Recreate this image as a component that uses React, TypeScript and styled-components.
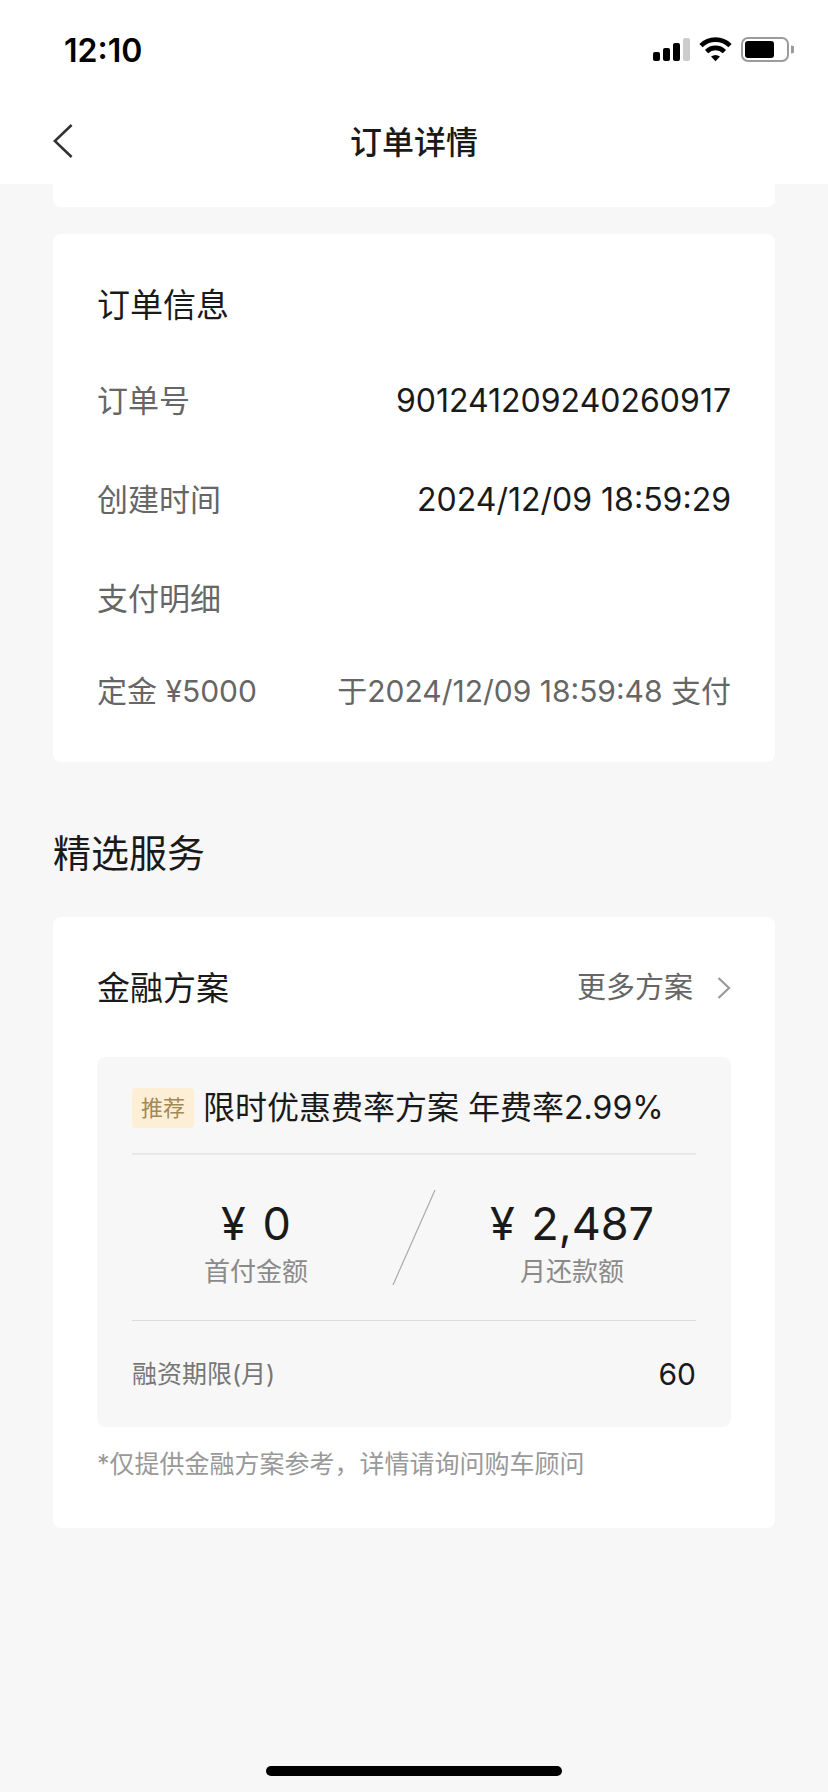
import React from "react";
import styled, { createGlobalStyle } from "styled-components";

const GlobalStyle = createGlobalStyle`
  *, *::before, *::after { box-sizing: border-box; }
  body {
    margin: 0;
    background: #f7f7f7;
    color: #1a1a1a;
    font-family: Inter, "Noto Sans CJK SC", sans-serif;
  }
  h1, h2, h3, p, dl, dt, dd { margin: 0; font-weight: 400; }
`;

const Page = styled.div`
  display: flex;
  flex-direction: column;
  min-height: 100vh;
`;

const Header = styled.header`
  background: #fff;
`;

const StatusBar = styled.div`
  display: flex;
  align-items: center;
  justify-content: space-between;
  height: 98px;
  padding: 0 34px 0 64px;
`;

const Clock = styled.time`
  padding-top: 3px;
  font-size: 32px;
  line-height: 40px;
  font-weight: 600;
  color: #000;
`;

const StatusIcons = styled.div`
  display: flex;
  align-items: center;
  gap: 9px;
`;

const NavBar = styled.nav`
  display: grid;
  grid-template-columns: 1fr auto 1fr;
  align-items: center;
  height: 86px;
  padding: 0 53px;
`;

const BackButton = styled.button`
  display: flex;
  justify-self: start;
  padding: 0;
  border: 0;
  background: none;
`;

const NavTitle = styled.h1`
  padding-top: 3px;
  font-size: 32px;
  line-height: 48px;
  font-weight: 500;
`;

const Content = styled.main`
  padding: 0 53px;
`;

const PreviousCard = styled.div`
  height: 23px;
  border-radius: 0 0 8px 8px;
  background: #fff;
`;

const Card = styled.section<{ $gap: number }>`
  margin-top: ${(p) => p.$gap}px;
  padding: 44px;
  border-radius: 8px;
  background: #fff;
`;

const CardHeader = styled.div`
  display: flex;
  align-items: center;
  justify-content: space-between;
`;

const CardTitle = styled.h3`
  font-size: 33px;
  line-height: 54px;
`;

const SectionTitle = styled.h2`
  margin-top: 63px;
  font-size: 38px;
  line-height: 56px;
`;

const InfoList = styled.dl`
  display: flex;
  flex-direction: column;
  gap: 51px;
  margin-top: 45px;
`;

const InfoRow = styled.div`
  display: flex;
  justify-content: space-between;
  line-height: 48px;
`;

const InfoLabel = styled.dt`
  font-size: 31px;
  color: #666;
`;

const InfoValue = styled.dd`
  font-size: 32px;
`;

const PaymentRow = styled.p`
  display: flex;
  justify-content: space-between;
  margin: 44px 0 3px;
  font-size: 30px;
  line-height: 48px;
  color: #666;
`;

const MoreLink = styled.a`
  display: flex;
  align-items: center;
  gap: 24px;
  font-size: 29px;
  line-height: 48px;
  color: #666;
  text-decoration: none;
`;

const Plan = styled.div`
  margin-top: 42px;
  padding: 0 35px;
  border-radius: 8px;
  background: #f7f7f7;
`;

const PlanHeader = styled.div`
  display: flex;
  align-items: center;
  gap: 9px;
  padding: 27px 0 21px;
  border-bottom: 2px solid #e8e8e8;
`;

const Tag = styled.span`
  padding: 0 9px;
  border-radius: 4px;
  background: #fdefd6;
  color: #a38857;
  font-size: 22px;
  line-height: 40px;
`;

const PlanName = styled.span`
  font-size: 32px;
  line-height: 48px;
`;

const Metrics = styled.div`
  display: grid;
  grid-template-columns: 1fr 68px 1fr;
  justify-items: center;
  padding: 35px 0 30px;
  border-bottom: 1px solid #ddd;
`;

const Metric = styled.div`
  display: flex;
  flex-direction: column;
  align-items: center;
  gap: 4px;
  padding-top: 8px;
`;

const Amount = styled.span`
  font-size: 45px;
  line-height: 52px;
`;

const Currency = styled.span`
  margin-right: 4px;
`;

const MetricLabel = styled.span`
  font-size: 26px;
  line-height: 36px;
  color: #8a8a8a;
`;

const TermRow = styled.div`
  display: flex;
  justify-content: space-between;
  padding: 29px 0;
  line-height: 48px;
`;

const TermLabel = styled.span`
  font-size: 25px;
  color: #777;
`;

const TermValue = styled.span`
  font-size: 30px;
`;

const Note = styled.p`
  margin-top: 17px;
  font-size: 25px;
  line-height: 40px;
  color: #999;
`;

const HomeIndicator = styled.div`
  width: 296px;
  height: 10px;
  margin: auto auto 16px;
  border-radius: 5px;
  background: #000;
`;

const SignalIcon = () => (
  <svg width="37" height="25" viewBox="0 0 37 25" aria-hidden="true">
    <rect x="0" y="15" width="7" height="9" rx="2" />
    <rect x="10" y="11" width="7" height="13" rx="2" />
    <rect x="20" y="6" width="7" height="18" rx="2" />
    <rect x="30" y="1" width="7" height="23" rx="2" fill="#ccc" />
  </svg>
);

const WifiIcon = () => (
  <svg width="33" height="25" viewBox="0 0 33 25" aria-hidden="true">
    <g fill="none" stroke="#000" strokeWidth="4.6">
      <path d="M2 8.6A20.5 20.5 0 0 1 31 8.6" />
      <path d="M7.6 14.6A12.6 12.6 0 0 1 25.4 14.6" />
    </g>
    <path d="M12 19.6Q16.5 16.2 21 19.6L16.5 24.2Z" />
  </svg>
);

const BatteryIcon = () => (
  <svg width="53" height="25" viewBox="0 0 53 25" aria-hidden="true">
    <rect x="1" y="1" width="46" height="23" rx="6" fill="none" stroke="#9b9b9b" strokeWidth="2" />
    <rect x="4" y="4" width="29" height="17" rx="3" />
    <path d="M50 8.5A4 4 0 0 1 50 16.5Z" fill="#9b9b9b" />
  </svg>
);

const BackIcon = () => (
  <svg width="20" height="34" viewBox="0 0 20 34" fill="none" stroke="#333" strokeWidth="2.6" aria-hidden="true">
    <path d="M18.6 1L1.8 17L18.6 33" />
  </svg>
);

const ChevronIcon = () => (
  <svg width="14" height="22" viewBox="0 0 14 22" fill="none" stroke="#999" strokeWidth="2.2" aria-hidden="true">
    <path d="M1.5 1L12 11L1.5 21" />
  </svg>
);

const Slash = () => (
  <svg width="44" height="95" viewBox="0 0 44 95" stroke="#aaa" strokeWidth="1.2" aria-hidden="true">
    <path d="M1 95L43 0" />
  </svg>
);

const orderInfo = [
  { label: "订单号", value: "901241209240260917" },
  { label: "创建时间", value: "2024/12/09 18:59:29" },
  { label: "支付明细", value: "" },
];

const PlanMetric = ({ amount, label }: { amount: string; label: string }) => (
  <Metric>
    <Amount>
      <Currency>¥</Currency> {amount}
    </Amount>
    <MetricLabel>{label}</MetricLabel>
  </Metric>
);

export default function App() {
  return (
    <Page>
      <GlobalStyle />
      <Header>
        <StatusBar>
          <Clock>12:10</Clock>
          <StatusIcons>
            <SignalIcon />
            <WifiIcon />
            <BatteryIcon />
          </StatusIcons>
        </StatusBar>
        <NavBar>
          <BackButton type="button" aria-label="返回">
            <BackIcon />
          </BackButton>
          <NavTitle>订单详情</NavTitle>
        </NavBar>
      </Header>
      <Content>
        <PreviousCard />
        <Card $gap={27}>
          <CardTitle>订单信息</CardTitle>
          <InfoList>
            {orderInfo.map((row) => (
              <InfoRow key={row.label}>
                <InfoLabel>{row.label}</InfoLabel>
                <InfoValue>{row.value}</InfoValue>
              </InfoRow>
            ))}
          </InfoList>
          <PaymentRow>
            <span>定金 ¥5000</span>
            <span>于2024/12/09 18:59:48 支付</span>
          </PaymentRow>
        </Card>
        <SectionTitle>精选服务</SectionTitle>
        <Card $gap={36}>
          <CardHeader>
            <CardTitle>金融方案</CardTitle>
            <MoreLink href="#plans">
              更多方案
              <ChevronIcon />
            </MoreLink>
          </CardHeader>
          <Plan>
            <PlanHeader>
              <Tag>推荐</Tag>
              <PlanName>限时优惠费率方案 年费率2.99%</PlanName>
            </PlanHeader>
            <Metrics>
              <PlanMetric amount="0" label="首付金额" />
              <Slash />
              <PlanMetric amount="2,487" label="月还款额" />
            </Metrics>
            <TermRow>
              <TermLabel>融资期限(月)</TermLabel>
              <TermValue>60</TermValue>
            </TermRow>
          </Plan>
          <Note>*仅提供金融方案参考，详情请询问购车顾问</Note>
        </Card>
      </Content>
      <HomeIndicator />
    </Page>
  );
}
